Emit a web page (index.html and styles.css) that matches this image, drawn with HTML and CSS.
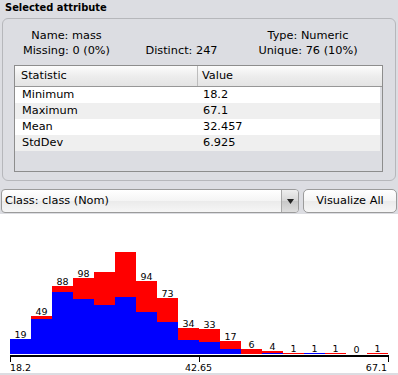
FILE: index.html
```html
<!DOCTYPE html>
<html>
<head>
<meta charset="utf-8">
<link rel="stylesheet" href="styles.css">
</head>
<body>
<div class="title">Selected attribute</div>
<div class="group">
  <div class="info">
    <div class="cell">Name: mass</div>
    <div class="cell"></div>
    <div class="cell">Type: Numeric</div>
    <div class="cell">Missing: 0 (0%)</div>
    <div class="cell">Distinct: 247</div>
    <div class="cell">Unique: 76 (10%)</div>
  </div>
  <div class="table">
    <div class="thead">
      <div class="th col1">Statistic</div>
      <div class="th col2">Value</div>
    </div>
    <div class="row"><div class="td col1">Minimum</div><div class="td col2">18.2</div></div>
    <div class="row alt"><div class="td col1">Maximum</div><div class="td col2">67.1</div></div>
    <div class="row"><div class="td col1">Mean</div><div class="td col2">32.457</div></div>
    <div class="row alt"><div class="td col1">StdDev</div><div class="td col2">6.925</div></div>
  </div>
</div>
<div class="controls">
  <div class="combo">
    <span class="combo-text">Class: class (Nom)</span>
    <span class="combo-arrow"><svg width="7" height="5" viewBox="0 0 7 5"><polygon points="0,0 7,0 3.5,5" fill="#222"/></svg></span>
  </div>
  <button class="btn">Visualize All</button>
</div>
<div class="hist">
  <div class="plot">
    <div class="bin"><div class="cnt">19</div><div class="red" style="height:0px"></div><div class="blue" style="height:15px"></div></div>
    <div class="bin"><div class="cnt">49</div><div class="red" style="height:3px"></div><div class="blue" style="height:35px"></div></div>
    <div class="bin"><div class="cnt">88</div><div class="red" style="height:6px"></div><div class="blue" style="height:62px"></div></div>
    <div class="bin"><div class="cnt">98</div><div class="red" style="height:21px"></div><div class="blue" style="height:55px"></div></div>
    <div class="bin"><div class="red" style="height:33px"></div><div class="blue" style="height:49px"></div></div>
    <div class="bin"><div class="red" style="height:45px"></div><div class="blue" style="height:57px"></div></div>
    <div class="bin"><div class="cnt">94</div><div class="red" style="height:31px"></div><div class="blue" style="height:42px"></div></div>
    <div class="bin"><div class="cnt">73</div><div class="red" style="height:24px"></div><div class="blue" style="height:32px"></div></div>
    <div class="bin"><div class="cnt">34</div><div class="red" style="height:12px"></div><div class="blue" style="height:14px"></div></div>
    <div class="bin"><div class="cnt">33</div><div class="red" style="height:13px"></div><div class="blue" style="height:12px"></div></div>
    <div class="bin"><div class="cnt">17</div><div class="red" style="height:8px"></div><div class="blue" style="height:5px"></div></div>
    <div class="bin"><div class="cnt">6</div><div class="red" style="height:5px"></div><div class="blue" style="height:0px"></div></div>
    <div class="bin"><div class="cnt">4</div><div class="red" style="height:2px"></div><div class="blue" style="height:1px"></div></div>
    <div class="bin"><div class="cnt">1</div><div class="red" style="height:1px"></div><div class="blue" style="height:0px"></div></div>
    <div class="bin"><div class="cnt">1</div><div class="red" style="height:0px"></div><div class="blue" style="height:1px"></div></div>
    <div class="bin"><div class="cnt">1</div><div class="red" style="height:1px"></div><div class="blue" style="height:0px"></div></div>
    <div class="bin"><div class="cnt">0</div><div class="red" style="height:0px"></div><div class="blue" style="height:0px"></div></div>
    <div class="bin"><div class="cnt">1</div><div class="red" style="height:1px"></div><div class="blue" style="height:0px"></div></div>
  </div>
  <div class="axis"><span class="tick"></span><span class="tick"></span><span class="tick"></span></div>
  <div class="axis-labels">
    <span class="lab-left">18.2</span>
    <span class="lab-mid">42.65</span>
    <span class="lab-right">67.1</span>
  </div>
</div>
</body>
</html>
```
FILE: styles.css
```css
html, body {
  margin: 0;
  padding: 0;
}
body {
  width: 398px;
  height: 375px;
  overflow: hidden;
  background: #dcdde2;
  font-family: "DejaVu Sans", sans-serif;
  font-size: 11.3px;
  color: #000;
}
.title {
  height: 18px;
  box-sizing: border-box;
  padding-left: 5px;
  line-height: 16px;
  font-family: "DejaVu Sans Condensed", "DejaVu Sans", sans-serif;
  font-stretch: condensed;
  font-weight: bold;
  font-size: 11px;
}
.group {
  margin: 0 2px;
  height: 163px;
  box-sizing: border-box;
  border: 1px solid #b6b7bb;
  border-radius: 6px;
  padding-top: 9px;
}
.info {
  display: grid;
  grid-template-columns: 127px 103px 150px;
  line-height: 15px;
}
.cell {
  text-align: center;
  white-space: nowrap;
}
.table {
  margin: 7px 0 0 11px;
  width: 369px;
  height: 107px;
  box-sizing: border-box;
  border: 1px solid #8d8d8d;
  background: #dcdde2;
}
.thead {
  display: flex;
  height: 21px;
  box-sizing: border-box;
  line-height: 20px;
  border-bottom: 1px solid #979797;
  background: linear-gradient(#fcfcfc, #ececec 55%, #e4e4e4);
}
.th.col1 {
  width: 183px;
  box-sizing: border-box;
  padding-left: 6px;
  border-right: 1px solid #bdbdbd;
}
.th.col2 {
  padding-left: 4px;
}
.row {
  display: flex;
  height: 16px;
  line-height: 16px;
  margin-right: 2px;
  background: #ffffff;
}
.row.alt {
  background: #efefef;
}
.td.col1 {
  width: 183px;
  box-sizing: border-box;
  padding-left: 7px;
}
.td.col2 {
  padding-left: 5px;
}
.controls {
  display: flex;
  gap: 4px;
  padding: 8px 0 1px 1px;
}
.combo {
  width: 298px;
  height: 24px;
  box-sizing: border-box;
  border: 1px solid #9b9b9b;
  border-radius: 4px;
  display: flex;
  background: linear-gradient(#ffffff, #f4f4f4 50%, #ebebeb 52%, #f6f6f6);
  overflow: hidden;
}
.combo-text {
  flex: 1;
  padding-left: 3px;
  line-height: 22px;
}
.combo-arrow {
  width: 16px;
  border-left: 1px solid #a8a8a8;
  display: flex;
  align-items: center;
  justify-content: center;
  background: linear-gradient(#eeeeee, #d6d6d6 50%, #c8c8c8 52%, #dedede);
}
.btn {
  width: 94px;
  height: 24px;
  box-sizing: border-box;
  border: 1px solid #9b9b9b;
  border-radius: 5px;
  background: linear-gradient(#ffffff, #f4f4f4 50%, #ebebeb 52%, #f6f6f6);
  font: inherit;
  color: #000;
  padding: 0;
  line-height: 22px;
  text-align: center;
}
.hist {
  background: #ffffff;
  height: 159px;
}
.plot {
  height: 140px;
  display: flex;
  align-items: flex-end;
  padding-left: 10px;
}
.bin {
  width: 21px;
  display: flex;
  flex-direction: column;
}
.cnt {
  font-size: 9.5px;
  line-height: 9px;
  text-align: center;
}
.red {
  background: #ff0000;
}
.blue {
  background: #0000ff;
}
.axis {
  margin: 1px 0 0 10px;
  width: 379px;
  height: 5px;
  border-top: 2px solid #000;
  display: flex;
  justify-content: space-between;
}
.tick {
  width: 1px;
  height: 5px;
  background: #000;
}
.axis-labels {
  margin: 1px 0 0 10px;
  width: 379px;
  box-sizing: border-box;
  padding-right: 2px;
  display: grid;
  grid-template-columns: 1fr auto 1fr;
  font-size: 9.5px;
  line-height: 10px;
}
.lab-right {
  text-align: right;
}
```
